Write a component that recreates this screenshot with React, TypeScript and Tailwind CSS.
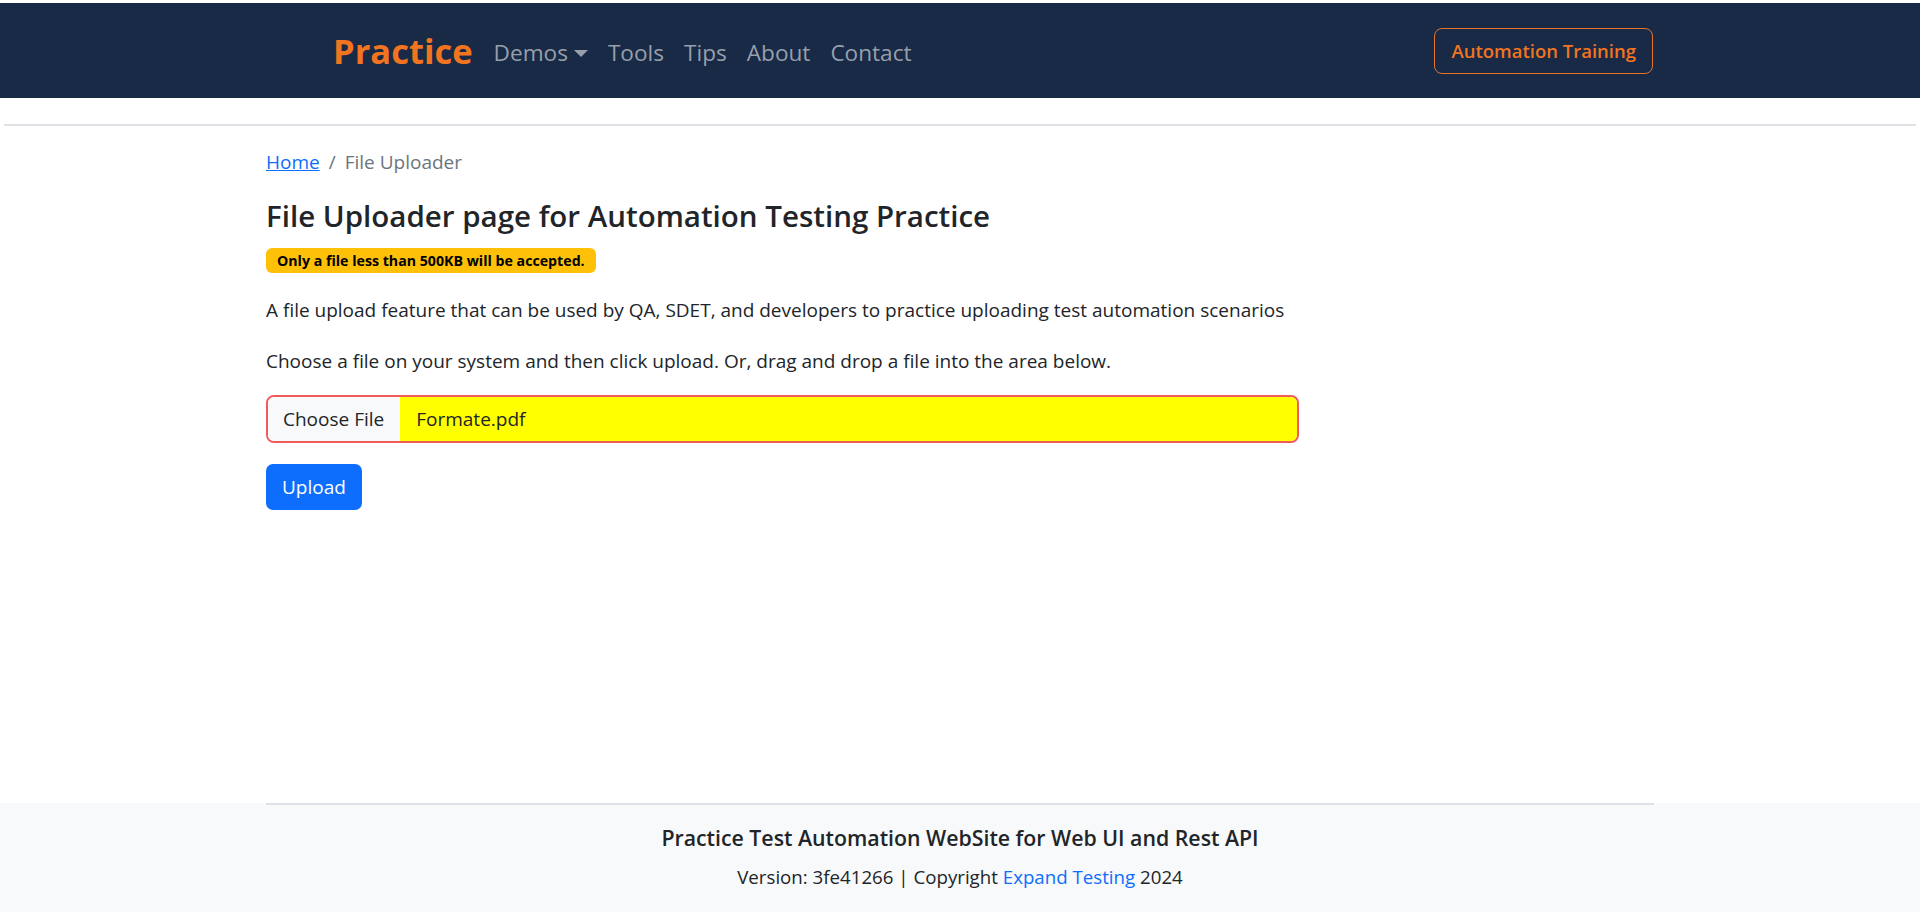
import React from "react";

const navLinks = ["Tools", "Tips", "About", "Contact"];

const App: React.FC = () => {
  return (
    <div className="flex min-h-[912px] flex-col bg-white pt-[3px] font-['Open_Sans',sans-serif] text-[#212529]">
      {/* Top navbar */}
      <nav className="h-[95px] bg-[#182a46]">
        <div className="mx-auto flex h-full w-[1388px] items-center justify-between">
          <div className="ml-[67px] flex items-center">
            <a href="#" className="mr-[11px] mt-[2px] text-[34.5px] font-bold leading-none text-[#f27420]">
              Practice
            </a>
            <a href="#" className="mt-[5px] flex items-center px-[10px] text-[22.6px] text-[#979fab]">
              Demos
              <span className="ml-[6px] mt-[2px] h-0 w-0 border-l-[7px] border-r-[7px] border-t-[7px] border-l-transparent border-r-transparent border-t-[#979fab]" />
            </a>
            {navLinks.map((link) => (
              <a key={link} href="#" className="mt-[5px] px-[10px] text-[22.6px] text-[#979fab]">
                {link}
              </a>
            ))}
          </div>
          <a
            href="#"
            className="mr-[1px] mt-[1px] flex h-[46px] items-center rounded-[8px] border border-[#e8742a] px-[16px] text-[18.5px] font-semibold text-[#f27420]"
          >
            Automation Training
          </a>
        </div>
      </nav>

      <div className="mx-[4px] mt-[26px] h-[2px] bg-[#dee2e6]" />

      {/* Page content */}
      <main className="mx-auto w-[1388px]">
        <div className="mt-[23px] flex text-[19px] leading-[27px]">
          <a href="#" className="text-[#0d6efd] underline">
            Home
          </a>
          <span className="px-[9px] text-[#6c757d]">/</span>
          <span className="text-[#6c757d]">File Uploader</span>
        </div>

        <h1 className="mt-[23px] text-[29.5px] font-semibold leading-[34px]">
          File Uploader page for Automation Testing Practice
        </h1>

        <span className="mt-[15px] inline-block h-[25px] rounded-[6px] bg-[#ffc107] px-[11px] text-[14.2px] font-bold leading-[25px] text-black">
          Only a file less than 500KB will be accepted.
        </span>

        <p className="mt-[23px] text-[19px] leading-[28px]">
          A file upload feature that can be used by QA, SDET, and developers to practice uploading test automation scenarios
        </p>
        <p className="mt-[22.5px] text-[19px] leading-[28px]">
          Choose a file on your system and then click upload. Or, drag and drop a file into the area below.
        </p>

        <div className="mt-[20.5px] flex h-[48px] w-[1033px] overflow-hidden rounded-[8px] border-2 border-[#ef5b5b] text-[19px]">
          <div className="flex items-center bg-[#f8f9fa] pl-[15px] pr-[16px]">Choose File</div>
          <div className="flex flex-1 items-center bg-[#ffff00] pl-[16px]">Formate.pdf</div>
        </div>

        <button
          type="button"
          className="mt-[21px] h-[46px] rounded-[7px] bg-[#0d6efd] px-[16px] text-[19px] text-white"
        >
          Upload
        </button>
      </main>

      {/* Footer */}
      <footer className="mt-auto h-[109px] bg-[#f8f9fa]">
        <div className="mx-auto w-[1388px] border-t-2 border-[#dee2e6] pt-[18px] text-center">
          <p className="text-[21.3px] font-semibold leading-[30px]">
            Practice Test Automation WebSite for Web UI and Rest API
          </p>
          <p className="mt-[10px] text-[18.7px] leading-[27px]">
            Version: 3fe41266 | Copyright{" "}
            <a href="#" className="text-[#0d6efd]">
              Expand Testing
            </a>{" "}
            2024
          </p>
        </div>
      </footer>
    </div>
  );
};

export default App;
